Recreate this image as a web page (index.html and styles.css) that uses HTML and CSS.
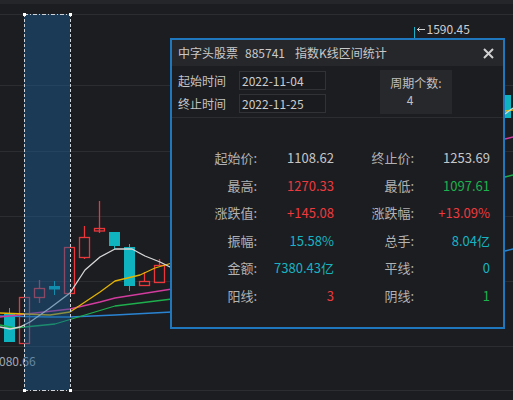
FILE: index.html
```html
<!DOCTYPE html>
<html lang="zh-CN">
<head>
<meta charset="utf-8">
<title>指数K线区间统计</title>
<link rel="stylesheet" href="styles.css">
</head>
<body>
<div class="screen">
  <svg class="chart" width="513" height="400" viewBox="0 0 513 400">
    <rect x="0" y="0" width="513" height="4" fill="#25262a"/>
    <g stroke="#2c2d31" stroke-width="1">
      <line x1="0" y1="14.5" x2="513" y2="14.5"/>
      <line x1="0" y1="85.5" x2="513" y2="85.5"/>
      <line x1="0" y1="151.5" x2="513" y2="151.5"/>
      <line x1="0" y1="216.5" x2="513" y2="216.5"/>
      <line x1="0" y1="281.5" x2="513" y2="281.5"/>
      <line x1="0" y1="346.5" x2="513" y2="346.5"/>
      <line x1="0" y1="390.5" x2="513" y2="390.5"/>
    </g>
    <!-- candles -->
    <g stroke="#e8383c" stroke-width="1.3" fill="none">
      <rect x="19.5" y="297.5" width="10" height="46"/>
      <line x1="39.5" y1="280" x2="39.5" y2="288.5"/><line x1="39.5" y1="297.5" x2="39.5" y2="303"/>
      <rect x="34.5" y="288.5" width="10" height="9"/>
      <rect x="64.5" y="247.5" width="10" height="46"/>
      <line x1="84.5" y1="226" x2="84.5" y2="237.5"/><line x1="84.5" y1="257.5" x2="84.5" y2="259"/>
      <rect x="79.5" y="237.5" width="10" height="20"/>
      <line x1="99.5" y1="201" x2="99.5" y2="233"/>
      <rect x="94.5" y="228.5" width="10" height="2.5"/>
      <line x1="144.5" y1="272" x2="144.5" y2="281.5"/>
      <rect x="139.5" y="281.5" width="10" height="4"/>
      <line x1="159.5" y1="259" x2="159.5" y2="265.5"/>
      <rect x="154.5" y="265.5" width="10" height="17"/>
    </g>
    <g fill="#0fb3bf" stroke="#0fb3bf" stroke-width="1">
      <line x1="9.5" y1="308" x2="9.5" y2="314"/>
      <rect x="4" y="314" width="11" height="28" stroke="none"/>
      <line x1="54.5" y1="281" x2="54.5" y2="295"/>
      <rect x="49" y="286" width="11" height="3.5" stroke="none"/>
      <line x1="114.5" y1="246" x2="114.5" y2="249"/>
      <rect x="109" y="232" width="11" height="14" stroke="none"/>
      <line x1="129.5" y1="244" x2="129.5" y2="291"/>
      <rect x="124" y="247" width="11" height="39" stroke="none"/>
      <rect x="505" y="95" width="6" height="23" stroke="none"/>
    </g>
    <!-- moving averages -->
    <g fill="none" stroke-width="1.3" stroke-linejoin="round">
      <polyline stroke="#2a84d2" points="0,316 50,317 70,317 115,315 172,312"/>
      <polyline stroke="#1fb04e" points="0,325 15,328 55,324 75,318 115,306 172,299"/>
      <polyline stroke="#d23c9e" points="0,317 70,309 100,302 115,298 172,289"/>
      <polyline stroke="#e4b400" points="0,313 25,314 50,315 70,312 100,292 115,281 140,275 155,268 172,263"/>
      <polyline stroke="#d8d8d8" points="0,327 10,329 20,327 30,322 50,308 70,293 85,270 100,257 115,249 132,249 145,256 160,262 172,268"/>
      <polyline stroke="#2a84d2" points="505,251 513,249"/>
      <polyline stroke="#1fb04e" points="505,177 513,175"/>
      <polyline stroke="#d23c9e" points="505,139 513,137"/>
      <polyline stroke="#e4b400" points="505,111 513,110"/>
      <polyline stroke="#d8d8d8" points="505,114 513,108"/>
    </g>
    <text class="axis-label" x="-1" y="366">080.66</text>
    <!-- selection -->
    <rect x="24" y="14" width="46" height="376" fill="rgba(24,96,150,0.45)"/>
    <g stroke="#cfd2d6" stroke-width="1" fill="none">
      <line x1="24.5" y1="14" x2="24.5" y2="390" stroke-dasharray="3,2"/>
      <line x1="70.5" y1="14" x2="70.5" y2="390" stroke-dasharray="3,2"/>
      <line x1="24" y1="14.5" x2="70" y2="14.5" stroke-dasharray="4,2,1,2"/>
      <line x1="24" y1="390.5" x2="70" y2="390.5" stroke-dasharray="4,2,1,2"/>
    </g>
    <g fill="#ffffff">
      <rect x="23" y="13" width="3" height="3"/>
      <rect x="69" y="13" width="3" height="3"/>
      <rect x="23" y="389" width="3" height="3"/>
      <rect x="69" y="389" width="3" height="3"/>
    </g>
    <!-- max marker -->
    <line x1="414.5" y1="27" x2="414.5" y2="38" stroke="#1ab0c8" stroke-width="1"/>
    <g stroke="#cfcfcf" stroke-width="1" fill="none">
      <line x1="417" y1="29.5" x2="425" y2="29.5"/>
      <polyline points="419.5,27.5 417.5,29.5 419.5,31.5"/>
    </g>
    <text class="max-label" x="426.5" y="33.5">1590.45</text>
  </svg>

  <div class="dialog">
    <div class="dlg-head">
      <span class="dlg-title">中字头股票</span>
      <span class="dlg-title code">885741</span>
      <span class="dlg-title name">指数K线区间统计</span>
      <span class="close">
        <svg width="11" height="11" viewBox="0 0 11 11"><path d="M1 1 L10 10 M10 1 L1 10" stroke="#d0d0d0" stroke-width="2" fill="none"/></svg>
      </span>
    </div>
    <div class="dlg-range">
      <div class="dates">
        <div class="date-row"><span class="date-label">起始时间</span><span class="date-box">2022-11-04</span></div>
        <div class="date-row"><span class="date-label">终止时间</span><span class="date-box">2022-11-25</span></div>
      </div>
      <div class="period">
        <div class="period-title">周期个数:</div>
        <div class="period-value">4</div>
      </div>
    </div>
    <div class="stats">
      <span class="lbl">起始价:</span><span class="val">1108.62</span>
      <span class="lbl">终止价:</span><span class="val">1253.69</span>
      <span class="lbl">最高:</span><span class="val red">1270.33</span>
      <span class="lbl">最低:</span><span class="val green">1097.61</span>
      <span class="lbl">涨跌值:</span><span class="val red">+145.08</span>
      <span class="lbl">涨跌幅:</span><span class="val red">+13.09%</span>
      <span class="lbl">振幅:</span><span class="val cyan">15.58%</span>
      <span class="lbl">总手:</span><span class="val cyan">8.04亿</span>
      <span class="lbl">金额:</span><span class="val cyan">7380.43亿</span>
      <span class="lbl">平线:</span><span class="val cyan">0</span>
      <span class="lbl">阳线:</span><span class="val red">3</span>
      <span class="lbl">阴线:</span><span class="val green">1</span>
    </div>
  </div>
</div>
</body>
</html>
```
FILE: styles.css
```css
html, body {
  margin: 0;
  padding: 0;
  background: #1c1d21;
  overflow: hidden;
}
body {
  font-family: "Noto Sans CJK SC", "Noto Sans", sans-serif;
  color: #c8c8c8;
}
.screen {
  position: relative;
  width: 513px;
  height: 400px;
  overflow: hidden;
}
.chart {
  position: absolute;
  left: 0;
  top: 0;
  display: block;
}
.axis-label {
  font-family: "Noto Sans CJK SC", sans-serif;
  font-size: 12px;
  fill: #a3a8b0;
}
.max-label {
  font-family: "Noto Sans CJK SC", sans-serif;
  font-size: 12px;
  fill: #cfcfcf;
}
.dialog {
  position: absolute;
  left: 170px;
  top: 38px;
  width: 335px;
  height: 291px;
  box-sizing: border-box;
  border: 2px solid #1f78be;
  background: #1c1d21;
  display: flex;
  flex-direction: column;
}
.dlg-head {
  height: 26px;
  background: #26272b;
  display: flex;
  align-items: center;
  padding: 0 9px 0 6px;
  font-size: 12px;
  color: #c9c9c9;
}
.dlg-title { line-height: 26px; }
.code { margin-left: 7px; }
.name { margin-left: 10px; }
.close {
  margin-left: auto;
  display: flex;
  align-items: center;
}
.close svg { display: block; }
.dlg-range {
  height: 52px;
  display: flex;
  align-items: flex-start;
  padding: 4px 0 0 6px;
  box-sizing: border-box;
  border-bottom: 1px solid #2c2d31;
  flex: none;
}
.dates {
  display: flex;
  flex-direction: column;
  gap: 4px;
  padding-top: 1px;
}
.date-row {
  display: flex;
  align-items: center;
  font-size: 12px;
}
.date-label {
  width: 61px;
  color: #c4c4c4;
}
.date-box {
  width: 87px;
  height: 19px;
  box-sizing: border-box;
  border: 1px solid #303236;
  background: #1a1b1e;
  padding-left: 2px;
  line-height: 17px;
  color: #cccccc;
}
.period {
  margin-left: 54px;
  width: 72px;
  height: 44px;
  background: #27282c;
  box-sizing: border-box;
  padding-top: 5px;
  font-size: 12px;
  line-height: 16.5px;
  color: #c0c0c0;
  text-align: center;
}
.period-value { padding-right: 12px; }
.stats {
  display: grid;
  grid-template-columns: 85px 77px 80px 76px;
  grid-auto-rows: 27.6px;
  padding-top: 26px;
  font-size: 13px;
  line-height: 27.6px;
}
.lbl {
  text-align: right;
  color: #b2b2b2;
}
.val {
  text-align: right;
  color: #c6c6c6;
}
.red { color: #ec3a3e; }
.green { color: #1db14f; }
.cyan { color: #18b3c3; }
```
